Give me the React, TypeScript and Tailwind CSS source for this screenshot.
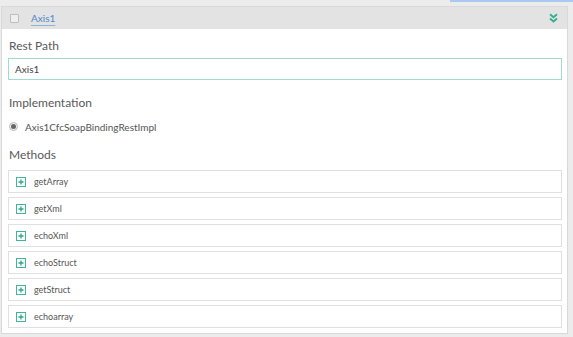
import React from "react";

const methods = ["getArray", "getXml", "echoXml", "echoStruct", "getStruct", "echoarray"];

function PlusBox() {
  return (
    <span className="flex h-[10px] w-[10px] items-center justify-center border border-[#3fb59b] bg-white">
      <svg width="6" height="6" viewBox="0 0 6 6">
        <path d="M3 0.5V5.5M0.5 3H5.5" stroke="#2aa88a" strokeWidth="1.3" />
      </svg>
    </span>
  );
}

export default function App() {
  return (
    <div
      className="relative h-[337px] w-[573px] overflow-hidden bg-[#ececec] pt-[6px] pl-[1px]"
      style={{ fontFamily: "Lato, 'Open Sans', sans-serif" }}
    >
      <div className="absolute right-0 top-0 h-[2px] w-[123px] bg-[#a9c8f2]" />
      <div className="w-[567px] h-[328px] border border-[#d9d9d9] bg-white">
        <div className="flex h-[22px] items-center bg-[#e3e3e3] pl-[8px] pr-[9px]">
          <span className="h-[9px] w-[9px] rounded-[1px] border border-[#bdbdbd] bg-[#efefef]" />
          <span className="ml-[12px] text-[10px] leading-none text-[#4f86c6] underline decoration-[#8fb2da] underline-offset-[3px]">
            Axis1
          </span>
          <span className="ml-auto">
            <svg width="9" height="10" viewBox="0 0 9 10">
              <path d="M1 1.2L4.5 4.2L8 1.2M1 5.5L4.5 8.5L8 5.5" stroke="#2fae92" strokeWidth="1.8" fill="none" />
            </svg>
          </span>
        </div>
        <div className="pl-[6px] pr-[5px]">
          <div className="mt-[9px] pl-[1px] text-[12px] leading-[16px] text-[#595959]">Rest Path</div>
          <div className="mt-[4px] flex h-[22px] items-center border border-[#9edccb] px-[6px] text-[10px] text-[#444]">
            Axis1
          </div>
          <div className="mt-[15px] pl-[1px] text-[12px] leading-[16px] text-[#595959]">Implementation</div>
          <div className="mt-[11px] flex h-[9px] items-center pl-[1px]">
            <span className="flex h-[9px] w-[9px] items-center justify-center rounded-full border border-[#bbb] bg-[#f2f2f2]">
              <span className="h-[5px] w-[5px] rounded-full bg-[#666]" />
            </span>
            <span className="ml-[7px] text-[10px] leading-none text-[#555]">Axis1CfcSoapBindingRestImpl</span>
          </div>
          <div className="mt-[16px] pl-[1px] text-[12px] leading-[16px] text-[#595959]">Methods</div>
          <div className="mt-[7px] flex flex-col gap-[4px]">
            {methods.map((m) => (
              <div key={m} className="flex h-[23px] items-center border border-[#e0e0e0] pl-[7px]">
                <PlusBox />
                <span className="ml-[8px] text-[9px] leading-none text-[#555]">{m}</span>
              </div>
            ))}
          </div>
        </div>
      </div>
    </div>
  );
}
